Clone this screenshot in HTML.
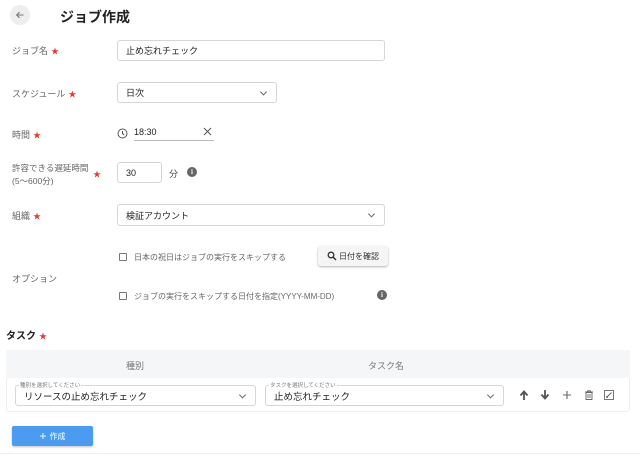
<!DOCTYPE html>
<html><head><meta charset="utf-8"><style>
*{box-sizing:border-box;margin:0;padding:0}
body{width:640px;height:456px;background:#fff;font-family:"Liberation Sans","Noto Sans CJK JP",sans-serif;color:#333;position:relative;overflow:hidden}
.a{position:absolute}
.lbl{font-size:9px;color:#666;line-height:12px}
.st{color:#e53935;font-size:8px;margin-left:3px}
.box{position:absolute;border:1px solid #d6d6d6;border-radius:3px;background:#fff;font-size:9px;color:#222;padding-left:8px;display:flex;align-items:center}
.chev{position:absolute;right:10px;top:50%;width:5px;height:5px;border-right:1px solid #666;border-bottom:1px solid #666;transform:translateY(-70%) rotate(45deg)}
.cb{position:absolute;width:8px;height:8px;border:1px solid #777;border-radius:1px}
.info{position:absolute;width:10px;height:10px;border-radius:50%;background:#666;color:#fff;font-size:7px;font-weight:bold;text-align:center;line-height:10px;font-family:"Liberation Serif",serif}
</style></head><body>
<div class="a" style="left:10px;top:5px;width:20px;height:20px;border-radius:50%;background:#eee"></div>
<svg class="a" style="left:14px;top:9px" width="12" height="12" viewBox="0 0 12 12"><path d="M9.5 6H3M5.5 3.2L2.7 6l2.8 2.8" stroke="#777" stroke-width="1.1" fill="none"/></svg>
<div class="a" style="left:60px;top:7px;font-size:14px;font-weight:bold;color:#222">ジョブ作成</div>

<div class="a lbl" style="left:12px;top:45px">ジョブ名<span class="st">★</span></div>
<div class="box" style="left:117px;top:40px;width:268px;height:21px">止め忘れチェック</div>

<div class="a lbl" style="left:12px;top:88px">スケジュール<span class="st">★</span></div>
<div class="box" style="left:117px;top:82px;width:160px;height:21px">日次<span class="chev"></span></div>

<div class="a lbl" style="left:12px;top:129px">時間<span class="st">★</span></div>
<svg class="a" style="left:117px;top:128px" width="11" height="11" viewBox="0 0 11 11"><circle cx="5.5" cy="5.5" r="4.5" stroke="#555" stroke-width="1" fill="none"/><path d="M5.5 3v2.7l1.8 1.2" stroke="#555" stroke-width="1" fill="none"/></svg>
<div class="a" style="left:134px;top:127px;font-size:9px;color:#222">18:30</div>
<div class="a" style="left:134px;top:140px;width:80px;height:1px;background:#bbb"></div>
<svg class="a" style="left:203px;top:127px" width="9" height="9" viewBox="0 0 9 9"><path d="M1 1l7 7M8 1L1 8" stroke="#555" stroke-width="1"/></svg>

<div class="a lbl" style="left:12px;top:162px;font-size:8.5px;line-height:13px">許容できる遅延時間<br>(5〜600分)</div>
<div class="a st" style="left:90px;top:169px">★</div>
<div class="box" style="left:117px;top:162px;width:45px;height:21px">30</div>
<div class="a" style="left:169px;top:167px;font-size:9px;color:#444">分</div>
<div class="info" style="left:187px;top:167px">i</div>

<div class="a lbl" style="left:12px;top:210px">組織<span class="st">★</span></div>
<div class="box" style="left:117px;top:204px;width:268px;height:22px">検証アカウント<span class="chev"></span></div>

<div class="cb" style="left:119px;top:253px"></div>
<div class="a" style="left:134px;top:252px;font-size:8px;color:#666">日本の祝日はジョブの実行をスキップする</div>
<div class="a" style="left:318px;top:246px;width:70px;height:20px;background:#f5f5f5;border-radius:3px;box-shadow:0 1px 2px rgba(0,0,0,.3);font-size:8px;color:#333;display:flex;align-items:center;justify-content:center">
<svg width="10" height="10" viewBox="0 0 10 10" style="margin-right:2px"><circle cx="4" cy="4" r="2.8" stroke="#333" stroke-width="1.3" fill="none"/><path d="M6 6l3 3" stroke="#333" stroke-width="1.5"/></svg>日付を確認</div>
<div class="a lbl" style="left:12px;top:273px">オプション</div>
<div class="cb" style="left:119px;top:292px"></div>
<div class="a" style="left:134px;top:291px;font-size:8px;color:#666">ジョブの実行をスキップする日付を指定(YYYY-MM-DD)</div>
<div class="info" style="left:377px;top:290px">i</div>

<div class="a" style="left:6px;top:327px;font-size:10px;font-weight:bold;color:#222">タスク<span class="st">★</span></div>
<div class="a" style="left:6px;top:350px;width:624px;height:62px;border:1px solid #eee;border-radius:3px"></div>
<div class="a" style="left:6px;top:350px;width:624px;height:28px;background:#f5f6f8"></div>
<div class="a" style="left:126px;top:359px;font-size:9px;color:#777">種別</div>
<div class="a" style="left:368px;top:359px;font-size:9px;color:#777">タスク名</div>

<div class="box" style="left:15px;top:385px;width:241px;height:21px;font-size:9.5px">リソースの止め忘れチェック<span class="chev"></span></div>
<div class="a" style="left:19px;top:381px;font-size:5.5px;color:#777;background:#fff;padding:0 1px">種別を選択してください</div>
<div class="box" style="left:265px;top:385px;width:239px;height:21px;font-size:9.5px">止め忘れチェック<span class="chev"></span></div>
<div class="a" style="left:269px;top:381px;font-size:5.5px;color:#777;background:#fff;padding:0 1px">タスクを選択してください</div>

<svg class="a" style="left:518px;top:389px" width="100" height="12" viewBox="0 0 100 12">
<path d="M6 11V3M2.5 6.5L6 2.5l3.5 4" stroke="#555" stroke-width="1.8" fill="none"/>
<path d="M27 1v8M23.5 5.5L27 9.5l3.5-4" stroke="#555" stroke-width="1.8" fill="none"/>
<path d="M49 2v8M45 6h8" stroke="#666" stroke-width="1.1"/>
<path d="M67 3h8M69.5 3V1.8h3V3M68 3.5h6v7h-6z M70 5v4M72 5v4" stroke="#666" stroke-width="0.9" fill="none"/>
<rect x="86.5" y="1.5" width="9" height="9" stroke="#666" stroke-width="0.9" fill="none"/><path d="M88.5 8.5l5-5M88.5 8.5l1.5-.2M88.5 8.5l.2-1.5" stroke="#666" stroke-width="1"/>
</svg>

<div class="a" style="left:12px;top:426px;width:81px;height:20px;background:#4b9cf0;border-radius:2px;box-shadow:0 1px 2px rgba(0,0,0,.25);color:#fff;font-size:8px;display:flex;align-items:center;justify-content:center"><span style="font-size:12px;margin-right:3px;line-height:1">+</span>作成</div>
<div class="a" style="left:0;top:453px;width:640px;height:1px;background:#eee"></div>
</body></html>
